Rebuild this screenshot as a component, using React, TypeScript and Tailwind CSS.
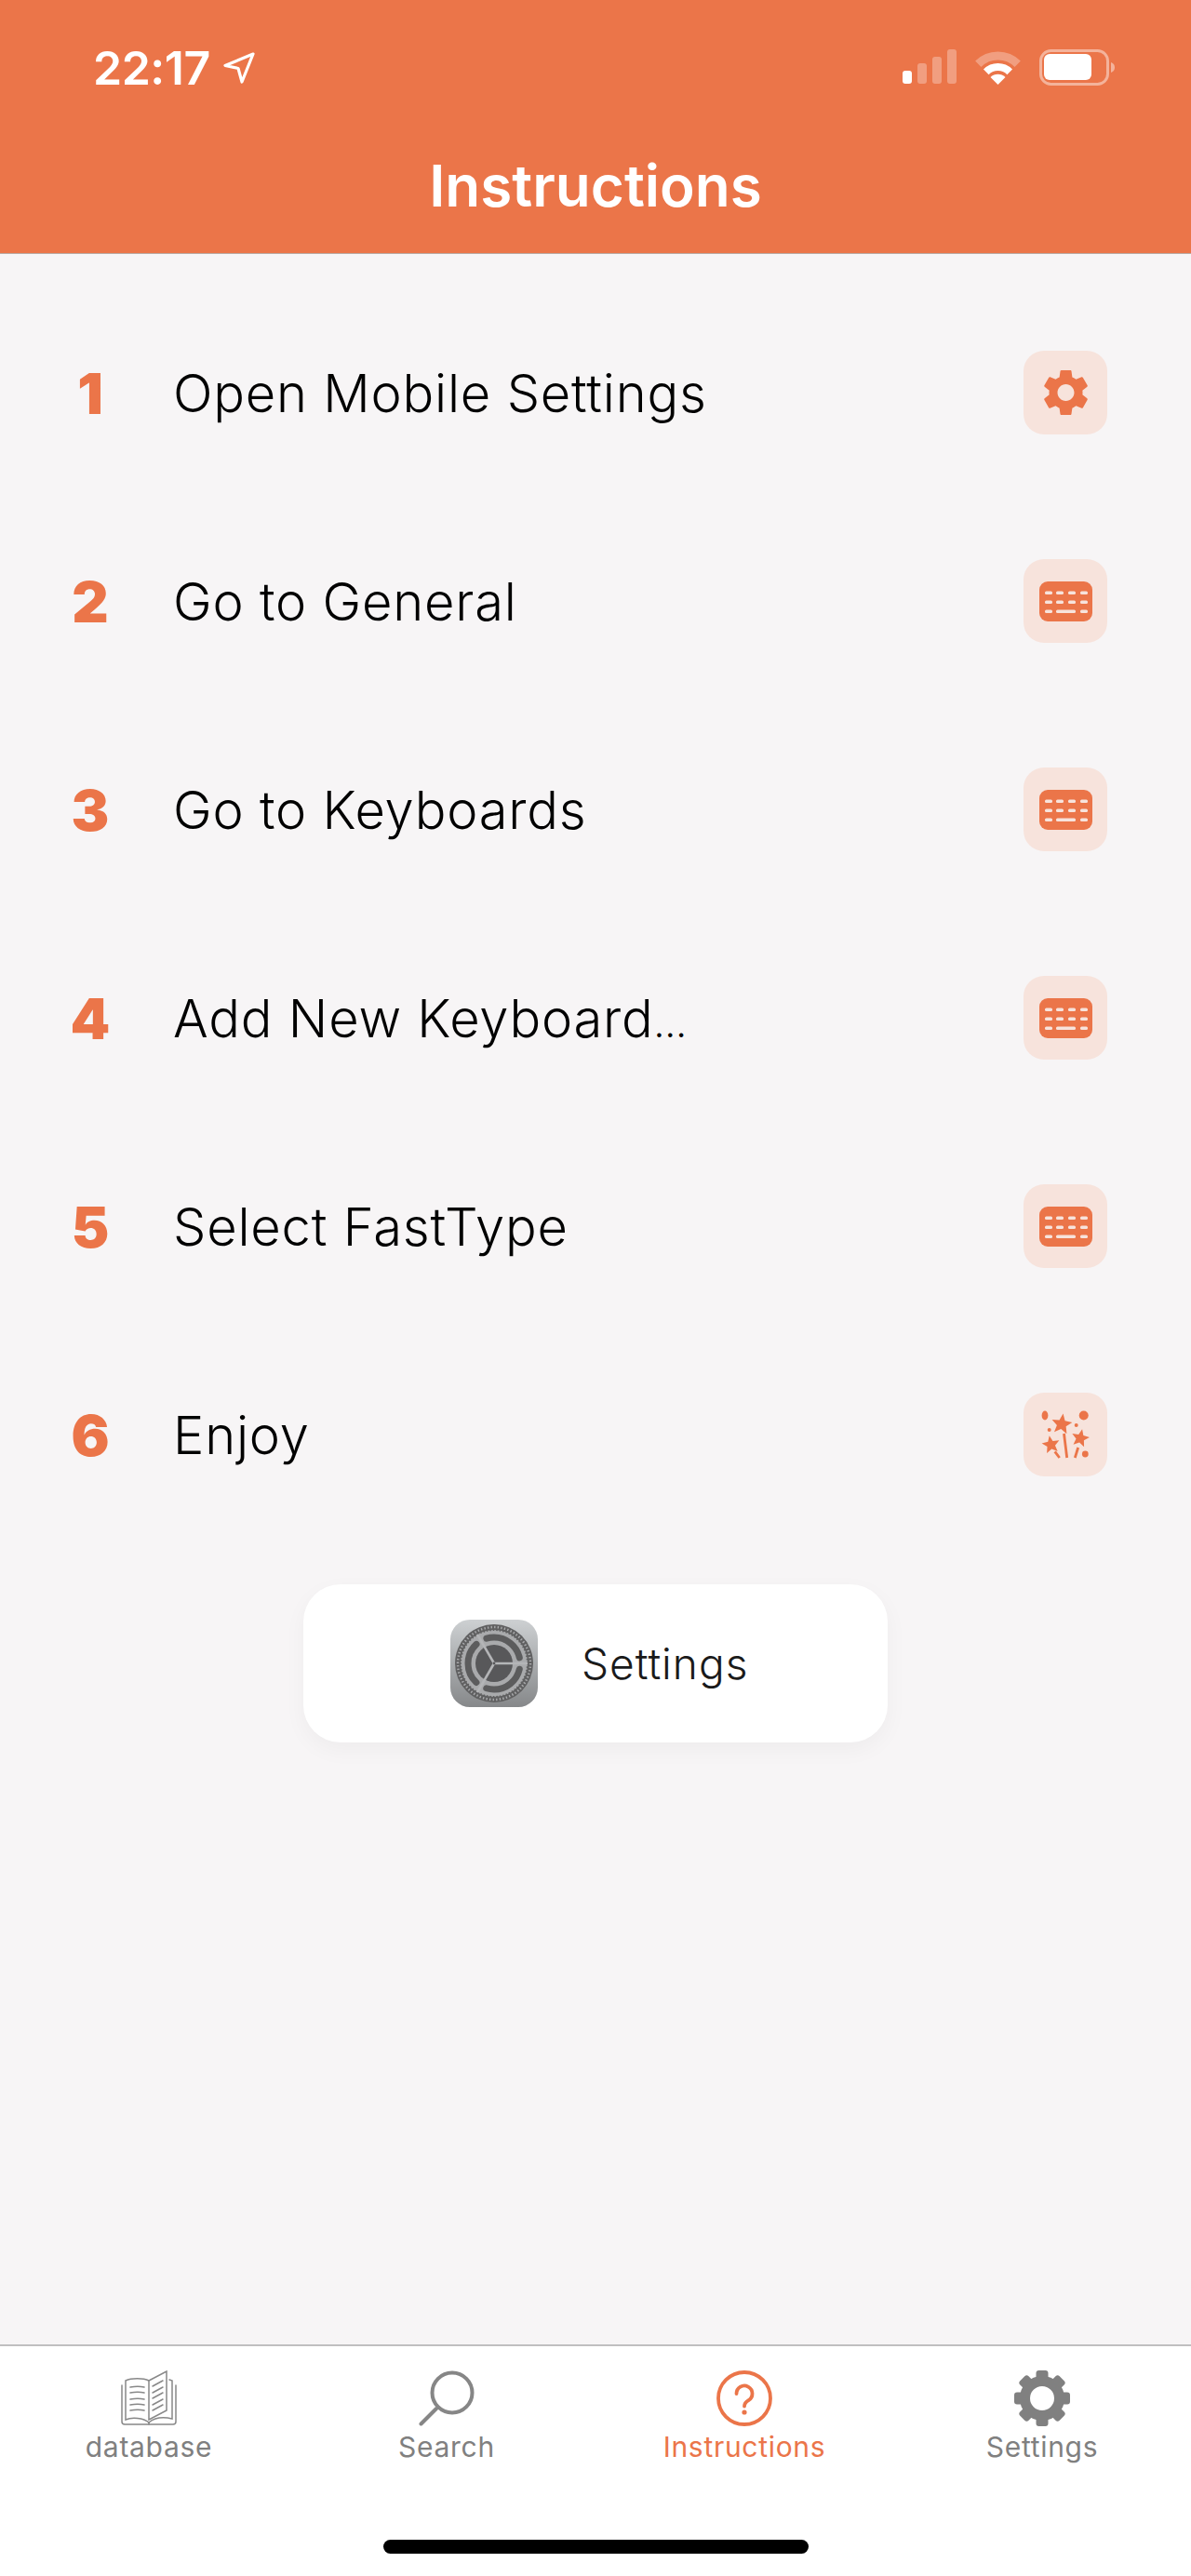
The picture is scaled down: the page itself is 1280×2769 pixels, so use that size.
const steps = [
  { n: 1, label: "Open Mobile Settings", icon: "gear" },
  { n: 2, label: "Go to General", icon: "keyboard" },
  { n: 3, label: "Go to Keyboards", icon: "keyboard" },
  { n: 4, label: "Add New Keyboard", tail: "…", icon: "keyboard" },
  { n: 5, label: "Select FastType", icon: "keyboard" },
  { n: 6, label: "Enjoy", icon: "party" },
];

function starPoints(cx: number, cy: number, r: number, rot: number) {
  const pts: string[] = [];
  for (let i = 0; i < 10; i++) {
    const rad = i % 2 === 0 ? r : r * 0.45;
    const a = ((rot + i * 36 - 90) * Math.PI) / 180;
    pts.push(`${(cx + rad * Math.cos(a)).toFixed(2)},${(cy + rad * Math.sin(a)).toFixed(2)}`);
  }
  return pts.join(" ");
}

function GearIcon() {
  return (
    <svg width="49" height="50" viewBox="2.6 2 18.8 20" fill="#eb7549">
      <path d="M19.14 12.94c.04-.3.06-.61.06-.94 0-.32-.02-.64-.07-.94l2.03-1.58c.18-.14.23-.41.12-.61l-1.92-3.32c-.12-.22-.37-.29-.59-.22l-2.39.96c-.5-.38-1.03-.7-1.62-.94l-.36-2.54c-.04-.24-.24-.41-.48-.41h-3.84c-.24 0-.43.17-.47.41l-.36 2.54c-.59.24-1.13.57-1.62.94l-2.39-.96c-.22-.08-.47 0-.59.22L2.74 8.87c-.12.21-.08.47.12.61l2.03 1.58c-.05.3-.09.63-.09.94s.02.64.07.94l-2.03 1.58c-.18.14-.23.41-.12.61l1.92 3.32c.12.22.37.29.59.22l2.39-.96c.5.38 1.03.7 1.62.94l.36 2.54c.05.24.24.41.48.41h3.84c.24 0 .44-.17.47-.41l.36-2.54c.59-.24 1.13-.56 1.62-.94l2.39.96c.22.08.47 0 .59-.22l1.92-3.32c.12-.22.07-.47-.12-.61l-2.01-1.58zM12 15.6c-1.98 0-3.6-1.62-3.6-3.6s1.62-3.6 3.6-3.6 3.6 1.62 3.6 3.6-1.62 3.6-3.6 3.6z" />
    </svg>
  );
}

function KeyboardIcon() {
  const keyX = [6, 18, 31, 44];
  const rows = [10.5, 20.5];
  return (
    <svg width="57" height="43" viewBox="0 0 57 43">
      <rect width="57" height="43" rx="9" fill="#eb7549" />
      {rows.map((y) =>
        keyX.map((x) => <rect key={`${x}-${y}`} x={x} y={y} width="8" height="3.4" rx="1.5" fill="#f7e3dc" />)
      )}
      <rect x="6" y="30.5" width="8" height="3.4" rx="1.5" fill="#f7e3dc" />
      <rect x="18" y="30.5" width="21" height="3.4" rx="1.5" fill="#f7e3dc" />
      <rect x="44" y="30.5" width="8" height="3.4" rx="1.5" fill="#f7e3dc" />
    </svg>
  );
}

function PartyIcon() {
  return (
    <svg width="90" height="90" viewBox="0 0 90 90" fill="#eb7549">
      <ellipse cx="23" cy="24.5" rx="3.4" ry="5" />
      <circle cx="64.7" cy="24.5" r="5" />
      <circle cx="66.3" cy="66" r="3.4" />
      <circle cx="56.7" cy="35" r="2" />
      <circle cx="27.7" cy="40" r="2" />
      <polygon points={starPoints(41, 34, 11.5, 8)} />
      <polygon points={starPoints(61, 49, 10, 12)} />
      <polygon points={starPoints(29.5, 56, 10, -10)} />
      <g stroke="#eb7549" strokeWidth="2.8" fill="none">
        <line x1="43.5" y1="44" x2="46.7" y2="70" />
        <line x1="58.7" y1="59" x2="55.3" y2="70" />
        <line x1="33.7" y1="63.3" x2="38.7" y2="70" />
      </g>
    </svg>
  );
}

function SettingsAppIcon() {
  return (
    <svg width="94" height="94" viewBox="0 0 94 94">
      <defs>
        <linearGradient id="appBg" x1="0" y1="0" x2="0" y2="1">
          <stop offset="0" stopColor="#cdd0d2" />
          <stop offset="1" stopColor="#86888a" />
        </linearGradient>
      </defs>
      <rect width="94" height="94" rx="21" fill="url(#appBg)" />
      <circle cx="47" cy="47" r="42" fill="#606061" />
      <circle cx="47" cy="47" r="36" fill="#a9aaac" />
      <circle cx="47" cy="47" r="37" fill="none" stroke="#606061" strokeWidth="4" strokeDasharray="1.6 2" />
      <circle cx="47" cy="47" r="39" fill="none" stroke="#a9aaac" strokeWidth="2.5" strokeDasharray="1.4 2.2" />
      <circle
        cx="47"
        cy="47"
        r="28"
        fill="none"
        stroke="#5c5c5d"
        strokeWidth="7"
        strokeDasharray="46 12.6"
        strokeDashoffset="-6.3"
        strokeLinecap="round"
      />
      <circle cx="47" cy="47" r="20" fill="#58585a" />
      <g stroke="#b4b5b7" strokeWidth="2.6">
        <line x1="47" y1="47" x2="83" y2="47" />
        <line x1="47" y1="47" x2="29" y2="15.8" />
        <line x1="47" y1="47" x2="29" y2="78.2" />
      </g>
      <circle cx="47" cy="47" r="1.4" fill="#58585a" />
    </svg>
  );
}

function BookIcon() {
  return (
    <svg width="60" height="60" viewBox="0 0 60 60" fill="none" stroke="#888888" strokeWidth="1.5" strokeLinecap="round">
      <path d="M30 11C24 8 11 8 5 11V53C12 50 24 51 30 56" />
      <path d="M30 11L49 1V43L30 53Z" />
      <path d="M52 10L55 11V52C46 50 36 51 30 56" />
      <path d="M1 16V55C1 57 2 58 4 58H56C58 58 59 57 59 55V16" />
      <path d="M30 56V58" />
      <path d="M10 18C15 17 21 17 25 18M10 24C15 23 21 23 25 24M10 31C15 30 21 30 25 31M10 37C15 36 21 36 25 37M10 43C15 42 21 42 25 43" />
      <path d="M34 17L45 11M34 24L45 18M34 30L45 24M34 37L45 31M34 43L45 37" />
    </svg>
  );
}

function SearchIcon() {
  return (
    <svg width="60" height="60" viewBox="0 0 60 60" fill="none" stroke="#868686" strokeWidth="4" strokeLinecap="round">
      <circle cx="36" cy="24" r="21.5" />
      <line x1="19" y1="41" x2="2.5" y2="57.5" />
    </svg>
  );
}

function QuestionIcon() {
  return (
    <svg width="60" height="60" viewBox="0 0 60 60" fill="none" stroke="#eb7549" strokeWidth="3.8" strokeLinecap="round">
      <circle cx="30" cy="30" r="28" />
      <path d="M21.500 25a8.500 8.500 0 1 1 13 7.200c-3 1.800-4.500 3-4.500 6.300" />
      <circle cx="30" cy="45" r="2.600" fill="#eb7549" stroke="none" />
    </svg>
  );
}

function TabGearIcon() {
  return (
    <svg width="60" height="60" viewBox="0 0 60 60" fill="#808080">
      {[0, 45, 90, 135, 180, 225, 270, 315].map((a) => (
        <rect key={a} x="23.5" y="0" width="13" height="16" rx="3" transform={`rotate(${a} 30 30)`} />
      ))}
      <circle cx="30" cy="30" r="18.5" fill="none" stroke="#808080" strokeWidth="11" />
    </svg>
  );
}

function SignalIcon() {
  return (
    <svg width="58" height="37" viewBox="0 0 58 37" fill="#ffffff">
      <rect x="0" y="23" width="10" height="14" rx="3" />
      <rect x="16" y="15" width="10" height="22" rx="3" opacity="0.3" />
      <rect x="32" y="8" width="10" height="29" rx="3" opacity="0.3" />
      <rect x="48" y="0" width="10" height="37" rx="3" opacity="0.3" />
    </svg>
  );
}

function WifiIcon() {
  return (
    <svg width="51" height="38" viewBox="0 0 51 38" fill="none" stroke="#ffffff">
      <path d="M4.300 15.800A30 30 0 0 1 46.700 15.800" strokeWidth="9" opacity="0.3" />
      <path d="M12.800 24.300A18 18 0 0 1 38.200 24.300" strokeWidth="8" />
      <path d="M25.500 38L17.500 30a11.500 11.500 0 0 1 16 0Z" fill="#ffffff" stroke="none" />
    </svg>
  );
}

function BatteryIcon() {
  return (
    <svg width="82" height="39" viewBox="0 0 82 39" fill="none">
      <rect x="1.500" y="1.500" width="72" height="36" rx="11" stroke="#ffffff" strokeWidth="3" opacity="0.45" />
      <rect x="5" y="5" width="51" height="28" rx="6" fill="#ffffff" />
      <path d="M77 14c3 1 4 3 4 5.500s-1 4.500-4 5.500Z" fill="#ffffff" opacity="0.45" />
    </svg>
  );
}

function LocationArrow() {
  return (
    <svg width="34" height="35" viewBox="0 0 34 35" fill="none" stroke="#ffffff" strokeWidth="3.2" strokeLinejoin="round">
      <path d="M32 3L2 15.500L16 18.500L20 33Z" />
    </svg>
  );
}

function StepRow({ n, label, tail, icon }: { n: number; label: string; tail?: string; icon: string }) {
  return (
    <div className="flex h-[90px] items-center">
      <div className="w-[186px] pl-[8px] pt-[2px] text-center text-[61px] leading-none font-black text-[#eb7549]">{n}</div>
      <div className="flex-1 pt-[1px] text-[56px] leading-none font-light tracking-[0.8px] text-black">
        {label}
        {tail && <span className="text-[42px]">{tail}</span>}
      </div>
      <div className="mr-[90px] flex h-[90px] w-[90px] items-center justify-center rounded-[22px] bg-[#f7e3dc]">
        {icon === "gear" && <GearIcon />}
        {icon === "keyboard" && <KeyboardIcon />}
        {icon === "party" && <PartyIcon />}
      </div>
    </div>
  );
}

function Tab({ label, active, children }: { label: string; active?: boolean; children: React.ReactNode }) {
  return (
    <div className="flex flex-col items-center">
      {children}
      <span className={`mt-[4px] text-[30px] leading-[36px] tracking-[0.7px] ${active ? "text-[#eb7549]" : "text-[#808080]"}`}>
        {label}
      </span>
    </div>
  );
}

export default function App() {
  return (
    <div className="flex h-[2769px] w-full flex-col bg-[#f7f5f6] font-['Inter',sans-serif]">
      <header className="h-[273px] border-b border-[#b9a9a2] bg-[#eb7549] text-white">
        <div className="flex items-start pt-[53px] pl-[100px] pr-[81px]">
          <span className="text-[50px] leading-[40px] font-semibold tracking-[-0.5px]">22:17</span>
          <span className="ml-[14px] mt-[2px]">
            <LocationArrow />
          </span>
          <div className="ml-auto flex items-start gap-[19px]">
            <SignalIcon />
            <WifiIcon />
            <BatteryIcon />
          </div>
        </div>
        <h1 className="mt-[71px] text-center text-[62px] leading-[72px] font-semibold">Instructions</h1>
      </header>

      <main className="flex flex-1 flex-col pt-[104px]">
        <div className="flex flex-col gap-[134px]">
          {steps.map((s) => (
            <StepRow key={s.n} n={s.n} label={s.label} tail={s.tail} icon={s.icon} />
          ))}
        </div>
        <div className="mx-auto mt-[116px] flex h-[170px] w-[628px] items-center rounded-[40px] bg-white pl-[158px] shadow-[0_8px_24px_rgba(0,0,0,0.04)]">
          <SettingsAppIcon />
          <span className="ml-[47px] text-[46px] leading-none font-light tracking-[1px] text-[#1a1a1a]">Settings</span>
        </div>
      </main>

      <footer className="flex h-[249px] flex-col border-t-2 border-[#c0bfc0] bg-white">
        <div className="grid grid-cols-4 pt-[26px]">
          <Tab label="database">
            <BookIcon />
          </Tab>
          <Tab label="Search">
            <SearchIcon />
          </Tab>
          <Tab label="Instructions" active>
            <QuestionIcon />
          </Tab>
          <Tab label="Settings">
            <TabGearIcon />
          </Tab>
        </div>
        <div className="mx-auto mt-auto mb-[24px] h-[15px] w-[457px] rounded-full bg-black" />
      </footer>
    </div>
  );
}
